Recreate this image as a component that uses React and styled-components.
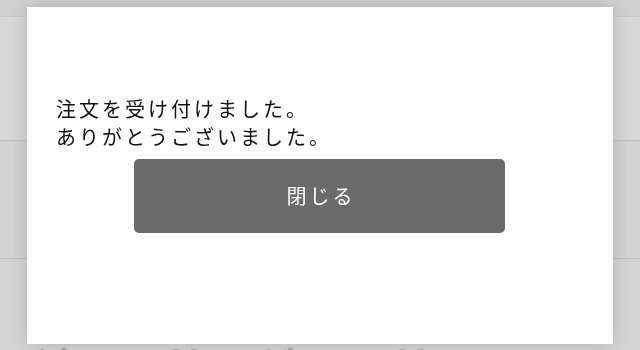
import React from 'react';
import styled, {createGlobalStyle} from 'styled-components';

const GlobalStyle = createGlobalStyle`
  html, body {
    margin: 0;
    padding: 0;
    height: 100%;
    overflow: hidden;
    background: #fafafa;
    font-family: "Noto Sans CJK JP", "Noto Sans", sans-serif;
  }
`

const Page = styled.div`
  width: 640px;
  height: 350px;
  overflow: hidden;
`

const TopBar = styled.div`
  height: 16px;
  background: #f4f4f4;
  border-bottom: 1px solid #ececec;
`

const Row = styled.div`
  height: ${props => props.height}px;
  background: ${props => props.shade};
  border-bottom: 1px solid #e4e4e4;
`

const Headline = styled.div`
  padding: 76px 0 0 30px;
  font-size: 40px;
  line-height: 56px;
  font-weight: 700;
  letter-spacing: 6px;
  color: #c4c4c4;
  white-space: nowrap;
`

const Overlay = styled.div`
  position: fixed;
  inset: 0;
  background: rgba(0, 0, 0, 0.15);
  display: flex;
  align-items: center;
  justify-content: center;
`

const Modal = styled.div`
  width: 586px;
  height: 337px;
  box-sizing: border-box;
  background: #ffffff;
  box-shadow: 0 0 18px rgba(0, 0, 0, 0.18);
  padding: 88px 29px 0;
  display: flex;
  flex-direction: column;
`

const Message = styled.p`
  margin: 0;
  font-size: 20px;
  line-height: 28px;
  letter-spacing: 3px;
  color: #111111;
`

const CloseButton = styled.button`
  align-self: center;
  width: 371px;
  height: 74px;
  margin-top: 8px;
  margin-left: -1px;
  border: none;
  border-radius: 5px;
  background: #6b6b6b;
  color: #ffffff;
  font-family: inherit;
  font-size: 20px;
  letter-spacing: 3px;
  padding: 0 0 0 3px;
  cursor: pointer;
`

const App = () => {
    return (
        <>
            <GlobalStyle/>
            <Page>
                <TopBar/>
                <Row height={123} shade={'#fdfdfd'}/>
                <Row height={117} shade={'#f8f8f8'}/>
                <Headline>ジュエリージュエリー</Headline>
            </Page>
            <Overlay>
                <Modal>
                    <Message>
                        注文を受け付けました。<br/>
                        ありがとうございました。
                    </Message>
                    <CloseButton type={'button'}>閉じる</CloseButton>
                </Modal>
            </Overlay>
        </>
    )
};

export default App;
